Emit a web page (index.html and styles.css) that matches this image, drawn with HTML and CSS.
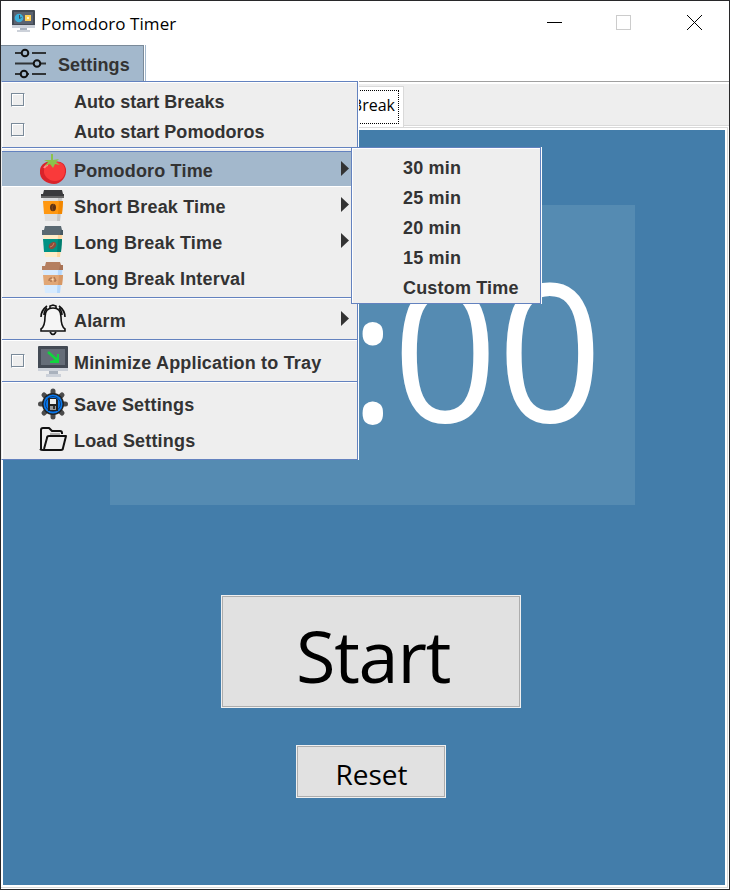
FILE: index.html
```html
<!DOCTYPE html>
<html lang="en">
<head>
<meta charset="utf-8">
<title>Pomodoro Timer</title>
<link rel="stylesheet" href="styles.css">
</head>
<body>
<div class="window">
  <header class="titlebar">
    <svg class="app-icon" width="24" height="24" viewBox="0 0 24 24">
      <rect x="0" y="1" width="23" height="18" rx="1" fill="#434a54"/>
      <rect x="2" y="3" width="19" height="12" fill="#5b6371"/>
      <path d="M0 16h23v3H0z" fill="#ccd1d9"/>
      <path d="M8 19h7v3H8z" fill="#aab2bd"/><path d="M5 21h13v2H5z" fill="#ccd1d9"/>
      <circle cx="7" cy="9" r="4.300" fill="#3bafda"/><path d="M7.500 6v3.500l2-1" stroke="#434a54" fill="none"/>
      <rect x="13" y="6" width="6" height="6" fill="#ffce54"/><rect x="15" y="8" width="2" height="2" fill="#fff3cf"/>
    </svg>
    <span class="title">Pomodoro Timer</span>
    <svg class="controls" width="160" height="18" viewBox="0 0 160 18" shape-rendering="crispEdges">
      <path d="M1 8.500h15" stroke="#000"/>
      <rect x="70.500" y="1.500" width="14" height="14" fill="none" stroke="#ccc"/>
      <path d="M141 1l15 15M156 1l-15 15" stroke="#000" shape-rendering="auto"/>
    </svg>
  </header>
  <nav class="menubar">
    <div class="menu-button">
      <svg width="32" height="32" viewBox="0 0 32 32" fill="none" stroke="#303437" stroke-width="2">
        <path d="M1 5h6M14 5h1M18 5h14M1 15.500h18M27 15.500h5M1 26h5M13 26h2M18 26h14"/>
        <g stroke="#111"><circle cx="11" cy="5" r="3.300"/><circle cx="23" cy="15.500" r="3.300"/><circle cx="10" cy="26" r="3.300"/></g>
      </svg>
      <span>Settings</span>
    </div>
  </nav>
  <div class="tabs"><div class="tab"><span class="focus">Long Break</span></div></div>
  <main class="content">
    <section class="clock"><div class="digits"><span>10</span><span class="colon">:</span><span>00</span></div></section>
    <button class="btn start">Start</button>
    <button class="btn reset">Reset</button>
  </main>

  <div class="popup settings">
    <div class="item small"><i class="check"></i><span></span><span class="tight">Auto start Breaks</span></div>
    <div class="item small"><i class="check"></i><span></span><span class="tight">Auto start Pomodoros</span></div>
    <div class="sep"></div>
    <div class="item active"><span></span>
      <svg width="32" height="32" viewBox="0 0 32 32">
        <path d="M16 8c7-2 12 1 13 7 1 8-5 15-12 15S2 25 3 17c0-6 6-11 13-9z" fill="#d9232a"/>
        <path d="M15 9c8-3 13 1 13 8 0 6-4 10-10 10S6 22 7 16c1-4 4-6 8-7z" fill="#f93a3a"/>
        <path d="M7 14q2-3 4-3" stroke="#ff8985" stroke-width="2" fill="none"/>
        <path d="M14 0h2v6l6-1-3 3 4 3-5-1-2 4-3-4-5 2 3-4-4-2 7 0z" fill="#8ac34a"/>
      </svg><span>Pomodoro Time</span><b class="arrow"></b></div>
    <div class="item"><span></span>
      <svg width="32" height="32" viewBox="0 0 32 32">
        <path d="M6 6h20l-3 25H8z" fill="#dedede"/><path d="M21 8h4l-2 23h-3z" fill="#c6c6c6"/>
        <path d="M7 0h18l1 4h1v4H4V4h2z" fill="#3b3b3d"/><path d="M4 6h23v2H4z" fill="#666"/>
        <path d="M6 11h20l-1 13H7z" fill="#ff9811"/><path d="M22 11h4l-1 13h-4z" fill="#f28700"/>
        <ellipse cx="16" cy="17.500" rx="3" ry="3.700" fill="#5d3215"/><path d="M17 14l-2 3 1 4" stroke="#8b4b13" fill="none"/>
      </svg><span>Short Break Time</span><b class="arrow"></b></div>
    <div class="item"><span></span>
      <svg width="32" height="32" viewBox="0 0 32 32">
        <path d="M6 8h20l-3 23H8z" fill="#ffecc8"/><path d="M21 8h4l-2 23h-3z" fill="#ffd69e"/>
        <path d="M8 0h16l1 4h1v5H5V4h2z" fill="#5a6972"/><path d="M24 4h2v5h-3z" fill="#465861"/>
        <path d="M6 13h19l-1 13H7z" fill="#009284"/><path d="M21 13h4l-1 13h-4z" fill="#007d70"/>
        <ellipse cx="15.500" cy="19.500" rx="4.200" ry="3" fill="#8d4c3b" transform="rotate(-42 15.500 19.500)"/><path d="M13 21q3 0 4-4" stroke="#c98062" fill="none"/>
      </svg><span>Long Break Time</span><b class="arrow"></b></div>
    <div class="item"><span></span>
      <svg width="32" height="32" viewBox="0 0 32 32">
        <path d="M6 8h20l-3 23H8z" fill="#d7ebff"/><path d="M21 8h4l-2 23h-3z" fill="#b5d8fd"/>
        <path d="M9 0h14l1 3h2v5H5V4h3z" fill="#b57f60"/><path d="M23 3h3v5h-4z" fill="#a87255"/>
        <path d="M6 13h20l-1 10H7z" fill="#e1a776"/><path d="M22 13h4l-1 10h-4z" fill="#d69765"/>
        <path d="M12 19q0-3 3-3M17 15l2 4M13 19h2m2 0h2" stroke="#b17953" stroke-width="1.500" fill="none"/><circle cx="15.500" cy="17.500" r="1" fill="#ffe1bd"/>
      </svg><span>Long Break Interval</span></div>
    <div class="sep"></div>
    <div class="item"><span></span>
      <svg width="32" height="32" viewBox="0 0 32 32" fill="none" stroke="#111" stroke-width="1.600">
        <path d="M16 4c-6 0-8 4-8 9 0 7-1 10-4 12v2h24v-2c-3-2-4-5-4-12 0-5-2-9-8-9z" fill="#f5f5f5"/>
        <path d="M13 4V2l3-1 3 1v2M13 28q3 5 6 0M4 13c0-4 2-8 6-11M28 13c0-4-2-8-6-11M7 11c0-3 1-5 3-7M25 11c0-3-1-5-3-7"/>
      </svg><span>Alarm</span><b class="arrow"></b></div>
    <div class="sep"></div>
    <div class="item"><i class="check"></i>
      <svg width="32" height="32" viewBox="0 0 32 32">
        <rect x="1" y="0" width="30" height="25" rx="1" fill="#434a54"/><rect x="4" y="3" width="24" height="16" fill="#656d78"/>
        <path d="M1 22h30v3H1z" fill="#ccd1d9"/><path d="M12 25h9v3h-9z" fill="#aab2bd"/><path d="M9 28h15v3H9z" fill="#ccd1d9"/>
        <path d="M11 6l9 8" stroke="#10d53d" stroke-width="2.500" fill="none"/>
        <path d="M22 8v9h-9v-2l4-1 3-3V8z" fill="#10d53d"/>
      </svg><span>Minimize Application to Tray</span></div>
    <div class="sep"></div>
    <div class="item"><span></span>
      <svg width="32" height="32" viewBox="0 0 32 32">
        <g stroke="#4b4b4b" stroke-width="5" stroke-linecap="round">
          <path d="M16 3v26M3.500 16h25M7 7l18 18M25 7L7 25"/>
        </g>
        <circle cx="16" cy="16" r="11" fill="#222"/>
        <circle cx="16" cy="16" r="9.500" fill="#0878ec"/>
        <circle cx="16" cy="16" r="7.500" fill="none" stroke="#0a3d80"/>
        <path d="M11 10h8l2 2v11H11z" fill="#222"/><path d="M13 11h6v5h-6z" fill="#eee"/><path d="M13 18h6v4h-6z" fill="#999"/><path d="M16 18h2v3h-2z" fill="#333"/>
      </svg><span>Save Settings</span></div>
    <div class="item"><span></span>
      <svg width="32" height="32" viewBox="0 0 32 32" fill="none" stroke="#111" stroke-width="2" stroke-linejoin="round">
        <path d="M4 25V6q0-2 2-2h6l3 3h8q2 0 2 2v1"/><path d="M3 25q1 1 3 1h18q2 0 2-2l3-12H12q-2 0-2 2L7 25"/>
        <path d="M13 10h10" stroke="#777" stroke-width="1"/>
      </svg><span>Load Settings</span></div>
  </div>

  <div class="popup submenu">
    <div class="choice">30 min</div>
    <div class="choice">25 min</div>
    <div class="choice">20 min</div>
    <div class="choice">15 min</div>
    <div class="choice">Custom Time</div>
  </div>
</div>
</body>
</html>
```
FILE: styles.css
```css
* { box-sizing: border-box; }
body { margin: 0; background: #fff; }
.window {
  position: relative;
  width: 730px;
  height: 890px;
  border: 1px solid #28282a;
  background: #fff;
  display: flex;
  flex-direction: column;
  overflow: hidden;
  font-family: "Open Sans", "Noto Sans", sans-serif;
}
.titlebar { height: 44px; display: flex; align-items: flex-start; padding: 8px 23px 0 11px; }
.title { margin-left: 5px; padding-top: 1px; font-size: 17px; line-height: 28px; letter-spacing: 0.05px; color: #000; }
.controls { margin-left: auto; margin-top: 5px; }
.menubar { height: 37px; border-bottom: 1px solid #a0a0a0; }
.menu-button {
  width: 143px;
  height: 36px;
  display: flex;
  align-items: center;
  gap: 12px;
  padding-left: 13px;
  background: #a3b8cc;
  border-top: 1px solid #7a8a99;
  border-right: 1px solid #7a8a99;
  box-shadow: 1px 0 #fff, 2px 0 #a3b8cc;
  font: bold 18px "Liberation Sans", Arial, sans-serif;
  letter-spacing: 0.1px;
  color: #333;
}
.menu-button span { padding-top: 3px; }
.tabs {
  height: 42px;
  margin-top: 2px;
  background: #eee;
  border-bottom: 1px solid #d9d9d9;
  flex: none;
}
.tab {
  width: 120px;
  height: 42px;
  margin-left: 283px;
  margin-top: 2px;
  padding: 3px 4px 0;
  background: #fff;
  border: 1px solid #d9d9d9;
  border-bottom: 0;
}
.focus {
  display: block;
  height: 34px;
  border: 1px dotted #000;
  padding-right: 3px;
  text-align: right;
  font-size: 16px;
  line-height: 29px;
}
.content {
  flex: none;
  height: 755px;
  margin: 4px 4px 0 2px;
  padding: 75px 0 0 17px;
  background: #437daa;
  display: flex;
  flex-direction: column;
  align-items: center;
  box-shadow: 0 0 0 2px #fff, 0 0 0 3px #d9d9d9;
}
.clock {
  width: 525px;
  height: 300px;
  background: #558bb2;
  color: #fff;
  flex: none;
}
.digits {
  display: flex;
  justify-content: center;
  align-items: baseline;
  font-size: 192px;
  line-height: 286px;
  letter-spacing: -0.600px;
  transform: scaleX(0.96);
}
.colon { margin: 0 -3px; font-size: 183px; }
.btn {
  background: #e1e1e1;
  border: 1px solid #adadad;
  outline: 1px solid #f0f0f0;
  color: #000;
  font-family: inherit;
  flex: none;
}
.start { width: 298px; height: 111px; margin: 91px 3px 0 0; font-size: 72px; line-height: 98px; letter-spacing: -1.200px; padding: 7px 0 0 4px; }
.reset { width: 148px; height: 51px; margin: 39px 3px 0 0; font-size: 28px; line-height: 38px; padding: 5px 0 0 1px; }
.popup {
  position: absolute;
  background: #eee;
  border: 1px solid #6382bf;
  font: bold 18px "Liberation Sans", Arial, sans-serif;
  letter-spacing: 0.180px;
  color: #333;
}
.settings {
  left: 0;
  top: 80px;
  width: 357px;
  height: 379px;
  padding: 3px 0 0;
  border-left-color: #eee;
  box-shadow: 1px 0 #fff, inset 1px 1px #fff;
}
.item {
  height: 36px;
  display: grid;
  grid-template-columns: 26px 32px 1fr auto;
  column-gap: 4px;
  align-items: center;
  padding: 0 8px 0 9px;
}
.item > svg { margin: 2px 0 0 -4px; }
.item > span { padding-top: 5px; }
.item > span:nth-child(3) { margin-left: -3px; }
.small { height: 30px; }
.item > .tight { letter-spacing: 0.030px; }
.active { background: #a3b8cc; border-top: 1px solid #6382bf; border-bottom: 1px solid #fff; }
.sep { height: 6px; padding-top: 2px; }
.sep::before { content: ""; display: block; height: 2px; background: linear-gradient(#6382bf 50%, #fff 50%); }
.check {
  width: 14px;
  height: 14px;
  border: 1px solid;
  border-color: #7a8a99 #fff #fff #7a8a99;
  box-shadow: inset -1px -1px #7a8a99, inset 1px 1px #fff;
}
.arrow {
  width: 8px;
  height: 15px;
  margin-top: -1px;
  background: #333;
  clip-path: polygon(0 0, 100% 50%, 0 100%);
}
.submenu {
  left: 350px;
  top: 146px;
  width: 190px;
  height: 157px;
  padding: 5px 0 0 51px;
  box-shadow: 1px 0 #fff, inset 1px 1px #fff;
}
.choice { height: 30px; line-height: 31px; }
```
